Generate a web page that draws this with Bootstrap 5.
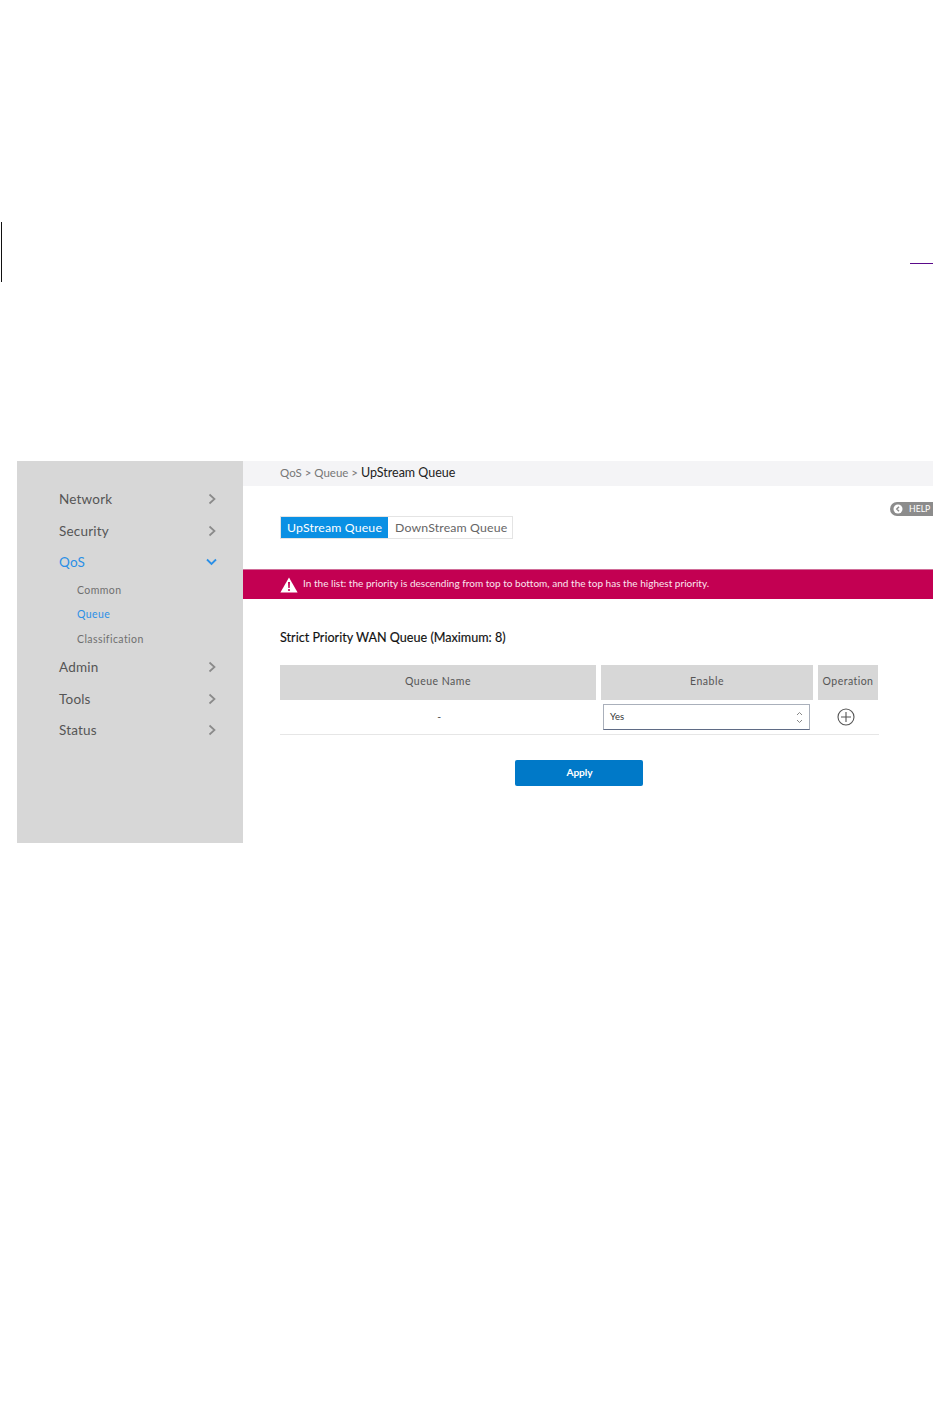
<!DOCTYPE html>
<html lang="en">
<head>
<meta charset="utf-8">
<title>UpStream Queue</title>
<link rel="stylesheet" href="https://cdn.jsdelivr.net/npm/bootstrap@5.3.0/dist/css/bootstrap.min.css">
<style>
body{background:#fff;font-family:"Lato","Liberation Sans",sans-serif;color:#222;min-height:1420px}
.page-wrap{width:933px}
.top-zone{height:461px}
.mark-v{width:1px;height:60px;background:#111;margin:222px 0 0 1px}
.mark-h{width:23px;height:1px;background:#5a0a8a;margin:263px 0 0 auto}
.shell{margin-left:17px;height:382px}
.side{width:226px;background:#d7d7d7;padding-top:22.5px;flex:none}
.side-link{height:31.5px;padding:0 27px 0 42px;font-size:13.5px;letter-spacing:.2px;color:#555}
.side-link.on{color:#2b8fe6}
.chev-open{margin-right:-1px}
.side-sub{height:24.5px;padding:1px 0 0 60px;font-size:10.5px;letter-spacing:.42px;color:#6f6f6f}
.side-sub.on{color:#2b8fe6}
.main-col{min-width:0}
.crumb{height:25px;line-height:24px;background:#f4f4f6;padding-left:37px;font-size:11.5px;color:#777}
.crumb b{font-weight:400;color:#222;font-size:12.5px}
.help-row{height:30px;padding-top:16px}
.help-pill{width:43px;height:14px;background:#8c8c8c;color:#fff;border-radius:7px 0 0 7px;font-size:8.7px;padding-left:3px;gap:6px}
.tab-row{padding-left:37px;height:53px}
.tab-pair{height:23px;border:1px solid #e4e4e4;font-size:12.3px;letter-spacing:.15px}
.tab-a{background:#0a90e4;color:#fff;padding:1px 0 0 6px;width:107px}
.tab-b{color:#666;padding:1px 0 0 7px;width:124px}
.notice{height:30px;background:#c30052;border-top:1px solid #d06c98;padding-left:37px;color:#fbe6ef;font-size:10px;letter-spacing:.02px;gap:5px}
.notice span{padding-bottom:2px}
.queue-title{padding:31px 0 0 37px;height:66px;font-size:12.6px;color:#111;margin:0;font-weight:400;-webkit-text-stroke:.15px #111}
.q-table{margin-left:37px;width:599px;font-size:10.5px;letter-spacing:.5px;color:#555}
.q-head{gap:5px;height:35px;width:598px}
.q-head>div{background:#d7d7d7;padding-bottom:1px}
.c1{width:316px}.c2{width:212px}.c3{width:60px;letter-spacing:.45px}
.q-row{height:35px;border-bottom:1px solid #e6e6e6}
.q-name{width:318px;flex:none;padding:2px 0 0 1px}
.q-sel{width:207px;flex:none;height:26px;margin-left:5px;border:1px solid #aab0bb;border-bottom:1px solid #5f6b85;padding:0 6px;font-size:9.5px;letter-spacing:0;color:#333}
.q-op{width:69px;flex:none;padding-left:3px}
.apply-row{width:597px;margin:25px 0 0 37px}
.apply-btn{width:128px;height:26px;padding:0 0 0 2px;background:#0079c8;border:0;border-radius:2px;color:#fff;font-size:10.2px;font-weight:700;letter-spacing:-.1px}
</style>
</head>
<body class="m-0">
<div class="page-wrap">
  <div class="top-zone d-flex align-items-start">
    <div class="mark-v"></div>
    <div class="mark-h"></div>
  </div>
  <div class="shell d-flex">
    <nav class="side">
      <div class="side-link d-flex align-items-center justify-content-between"><span>Network</span><svg width="8" height="12" viewBox="0 0 8 12"><path d="M1.5 1.5 6.5 6 1.5 10.5" fill="none" stroke="#8a8a8a" stroke-width="1.7"/></svg></div>
      <div class="side-link d-flex align-items-center justify-content-between"><span>Security</span><svg width="8" height="12" viewBox="0 0 8 12"><path d="M1.5 1.5 6.5 6 1.5 10.5" fill="none" stroke="#8a8a8a" stroke-width="1.7"/></svg></div>
      <div class="side-link on d-flex align-items-center justify-content-between"><span>QoS</span><svg class="chev-open" width="11" height="8" viewBox="0 0 11 8"><path d="M1 1.5 5.5 6 10 1.5" fill="none" stroke="#2b8fe6" stroke-width="1.8"/></svg></div>
      <div>
        <div class="side-sub d-flex align-items-center">Common</div>
        <div class="side-sub on d-flex align-items-center">Queue</div>
        <div class="side-sub d-flex align-items-center">Classification</div>
      </div>
      <div class="side-link d-flex align-items-center justify-content-between"><span>Admin</span><svg width="8" height="12" viewBox="0 0 8 12"><path d="M1.5 1.5 6.5 6 1.5 10.5" fill="none" stroke="#8a8a8a" stroke-width="1.7"/></svg></div>
      <div class="side-link d-flex align-items-center justify-content-between"><span>Tools</span><svg width="8" height="12" viewBox="0 0 8 12"><path d="M1.5 1.5 6.5 6 1.5 10.5" fill="none" stroke="#8a8a8a" stroke-width="1.7"/></svg></div>
      <div class="side-link d-flex align-items-center justify-content-between"><span>Status</span><svg width="8" height="12" viewBox="0 0 8 12"><path d="M1.5 1.5 6.5 6 1.5 10.5" fill="none" stroke="#8a8a8a" stroke-width="1.7"/></svg></div>
    </nav>
    <main class="main-col flex-grow-1">
      <div class="crumb">QoS &gt; Queue &gt; <b>UpStream Queue</b></div>
      <div class="help-row d-flex justify-content-end">
        <div class="help-pill d-flex align-items-center">
          <svg width="10" height="10" viewBox="0 0 10 10"><circle cx="5" cy="5" r="4.5" fill="#fff"/><path d="M6 2.8 3.8 5 6 7.2" fill="none" stroke="#8c8c8c" stroke-width="1.5"/></svg>
          <span>HELP</span>
        </div>
      </div>
      <div class="tab-row d-flex align-items-start">
        <div class="tab-pair d-inline-flex">
          <div class="tab-a d-flex align-items-center text-nowrap">UpStream Queue</div>
          <div class="tab-b d-flex align-items-center text-nowrap">DownStream Queue</div>
        </div>
      </div>
      <div class="notice d-flex align-items-center">
        <svg width="18" height="16" viewBox="0 0 18 16"><path d="M9 .5 17.6 15.5H.4Z" fill="#fff"/><path d="M8 5h2l-.3 6H8.3Z" fill="#c30052"/><circle cx="9" cy="13" r="1.1" fill="#c30052"/></svg>
        <span>In the list: the priority is descending from top to bottom, and the top has the highest priority.</span>
      </div>
      <h2 class="queue-title">Strict Priority WAN Queue (Maximum: 8)</h2>
      <div class="q-table">
        <div class="q-head d-flex">
          <div class="c1 d-flex align-items-center justify-content-center">Queue Name</div>
          <div class="c2 d-flex align-items-center justify-content-center">Enable</div>
          <div class="c3 d-flex align-items-center justify-content-center">Operation</div>
        </div>
        <div class="q-row d-flex align-items-center">
          <div class="q-name text-center">-</div>
          <div class="q-sel d-flex align-items-center justify-content-between">
            <span>Yes</span>
            <svg width="7" height="13" viewBox="0 0 7 13"><path d="M1 4 3.5 1.5 6 4M1 9 3.5 11.5 6 9" fill="none" stroke="#888" stroke-width="1"/></svg>
          </div>
          <div class="q-op d-flex justify-content-center">
            <svg width="18" height="18" viewBox="0 0 18 18"><circle cx="9" cy="9" r="8" fill="none" stroke="#555" stroke-width="1.1"/><path d="M9 4v10M4 9h10" stroke="#555" stroke-width="1.1"/></svg>
          </div>
        </div>
      </div>
      <div class="apply-row d-flex justify-content-center"><button type="button" class="btn apply-btn">Apply</button></div>
    </main>
  </div>
</div>
<script src="https://cdn.jsdelivr.net/npm/bootstrap@5.3.0/dist/js/bootstrap.bundle.min.js"></script>
</body>
</html>
